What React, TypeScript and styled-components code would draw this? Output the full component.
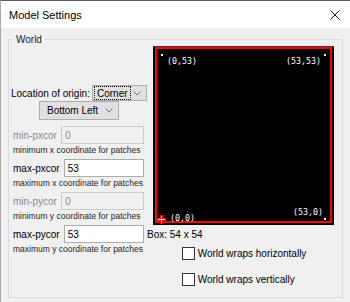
import styled, { createGlobalStyle } from "styled-components"

const GlobalStyle = createGlobalStyle`
  html, body {
    margin: 0;
    padding: 0;
    background: #f0f0f0;
  }
  body {
    font-family: "Liberation Sans", Arial, sans-serif;
    color: #000;
  }
`

const Window = styled.div`
  width: 350px;
  height: 302px;
  box-sizing: border-box;
  border-top: 1px solid #5a5a5a;
  border-left: 1px solid #a8a8a8;
  background: #f0f0f0;
  display: flex;
  flex-direction: column;
  overflow: hidden;
`

const TitleBar = styled.div`
  height: 27px;
  flex: none;
  background: #fff;
  display: flex;
  align-items: center;
  justify-content: space-between;
  padding: 0 10px 0 8px;
  font-size: 11px;
`

const Body = styled.div`
  flex: auto;
  display: flex;
  padding: 5px 7px 4px 7px;
`

const GroupBox = styled.fieldset`
  flex: auto;
  margin: 0;
  padding: 0 1px 0 2px;
  border: 1px solid #dcdcdc;
  display: flex;
  min-width: 0;
  legend {
    margin-left: 3px;
    padding: 0 2px;
    font-size: 10px;
    line-height: 13px;
    color: #1e1e1e;
  }
`

const LeftColumn = styled.div`
  width: 136px;
  flex: none;
  display: flex;
  flex-direction: column;
  padding-top: 39px;
  font-size: 10px;
`

const OriginRow = styled.div`
  display: flex;
  align-items: center;
  justify-content: space-between;
  height: 16px;
`

const Combo = styled.div<{ $width: number; $height: number; $center?: boolean }>`
  width: ${(p) => p.$width}px;
  height: ${(p) => p.$height}px;
  box-sizing: border-box;
  border: 1px solid #adadad;
  background: #e1e1e1;
  display: flex;
  align-items: center;
  justify-content: space-between;
  padding: 0 5px 0 1px;
  align-self: ${(p) => (p.$center ? "center" : "auto")};
  margin-bottom: ${(p) => (p.$center ? "2px" : "0")};
`

const ComboText = styled.span<{ $focus?: boolean }>`
  display: flex;
  align-items: center;
  height: 12px;
  padding: 0 2px 0 2px;
  margin-left: ${(p) => (p.$focus ? "0" : "3px")};
  border: 1px ${(p) => (p.$focus ? "dotted #000" : "solid transparent")};
`

const Chevron = () => (
  <svg width="8" height="5" viewBox="0 0 8 5">
    <polyline points="0.5,0.5 4,4 7.5,0.5" fill="none" stroke="#707070" strokeWidth="1" />
  </svg>
)

const FieldRow = styled.div<{ $disabled?: boolean }>`
  display: flex;
  align-items: center;
  gap: 4px;
  margin-top: 4px;
  padding: 0 3px 0 2px;
  color: ${(p) => (p.$disabled ? "#8a8a8a" : "#000")};
`

const FieldInput = styled.div<{ $disabled?: boolean }>`
  flex: auto;
  height: 18px;
  box-sizing: border-box;
  border: 1px solid ${(p) => (p.$disabled ? "#cccccc" : "#acacac")};
  background: ${(p) => (p.$disabled ? "#f0f0f0" : "#fff")};
  color: ${(p) => (p.$disabled ? "#8a8a8a" : "#000")};
  display: flex;
  align-items: center;
  padding-left: 3px;
`

const Hint = styled.div`
  font-size: 8.5px;
  line-height: 10px;
  margin-top: 1px;
  padding-left: 2px;
  color: #1e1e1e;
`

const RightColumn = styled.div`
  flex: auto;
  display: flex;
  flex-direction: column;
  font-size: 10px;
`

const Preview = styled.div`
  width: 181px;
  height: 179px;
  margin-left: 6px;
  box-sizing: border-box;
  background: #000;
  border-top: 1px solid #3c3c3c;
  padding: 0 2px 2px 2px;
`

const WorldEdge = styled.div`
  position: relative;
  height: 100%;
  box-sizing: border-box;
  border: 2px solid #ff0000;
`

const Coord = styled.span<{ $top?: number; $bottom?: number; $left?: number; $right?: number }>`
  position: absolute;
  font-family: "DejaVu Sans Mono", "Liberation Mono", monospace;
  font-size: 8.3px;
  line-height: 9px;
  color: #fff;
  white-space: nowrap;
  top: ${(p) => (p.$top !== undefined ? `${p.$top}px` : "auto")};
  bottom: ${(p) => (p.$bottom !== undefined ? `${p.$bottom}px` : "auto")};
  left: ${(p) => (p.$left !== undefined ? `${p.$left}px` : "auto")};
  right: ${(p) => (p.$right !== undefined ? `${p.$right}px` : "auto")};
`

const Dot = styled.span<{ $top?: number; $bottom?: number; $right?: number; $left?: number }>`
  position: absolute;
  width: 2px;
  height: 2px;
  background: #fff;
  top: ${(p) => (p.$top !== undefined ? `${p.$top}px` : "auto")};
  bottom: ${(p) => (p.$bottom !== undefined ? `${p.$bottom}px` : "auto")};
  left: ${(p) => (p.$left !== undefined ? `${p.$left}px` : "auto")};
  right: ${(p) => (p.$right !== undefined ? `${p.$right}px` : "auto")};
`

const Origin = styled.svg`
  position: absolute;
  left: 0;
  bottom: -3px;
`

const BoxLabel = styled.div`
  margin-top: 3px;
  line-height: 13px;
`

const Checks = styled.div`
  align-self: center;
  display: flex;
  flex-direction: column;
  gap: 13px;
  margin-top: 6px;
`

const CheckRow = styled.label`
  display: flex;
  align-items: center;
  gap: 3px;
  line-height: 13px;
`

const CheckBox = styled.span`
  width: 13px;
  height: 13px;
  box-sizing: border-box;
  border: 1px solid #333;
  background: #fff;
`

const fields = [
  { name: "min-pxcor", value: "0", hint: "minimum x coordinate for patches", disabled: true },
  { name: "max-pxcor", value: "53", hint: "maximum x coordinate for patches", disabled: false },
  { name: "min-pycor", value: "0", hint: "minimum y coordinate for patches", disabled: true },
  { name: "max-pycor", value: "53", hint: "maximum y coordinate for patches", disabled: false },
]

const App: React.FC = () => {
  return (
    <>
      <GlobalStyle />
      <Window>
        <TitleBar>
          <span>Model Settings</span>
          <svg width="10" height="10" viewBox="0 0 10 10">
            <path d="M0.5 0.5 L9.5 9.5 M9.5 0.5 L0.5 9.5" stroke="#111" strokeWidth="1" />
          </svg>
        </TitleBar>
        <Body>
          <GroupBox>
            <legend>World</legend>
            <LeftColumn>
              <OriginRow>
                <span>Location of origin:</span>
                <Combo $width={55} $height={16}>
                  <ComboText $focus>Corner</ComboText>
                  <Chevron />
                </Combo>
              </OriginRow>
              <Combo $width={80} $height={19} $center>
                <ComboText>Bottom Left</ComboText>
                <Chevron />
              </Combo>
              {fields.map((f) => (
                <div key={f.name}>
                  <FieldRow $disabled={f.disabled}>
                    <span>{f.name}</span>
                    <FieldInput $disabled={f.disabled}>{f.value}</FieldInput>
                  </FieldRow>
                  <Hint>{f.hint}</Hint>
                </div>
              ))}
            </LeftColumn>
            <RightColumn>
              <Preview>
                <WorldEdge>
                  <Dot $left={4} $top={5} />
                  <Coord $left={10} $top={8}>(0,53)</Coord>
                  <Dot $right={4} $top={5} />
                  <Coord $right={9} $top={8}>(53,53)</Coord>
                  <Coord $right={7} $bottom={4}>(53,0)</Coord>
                  <Dot $right={4} $bottom={1} />
                  <Origin width="9" height="9" viewBox="0 0 9 9">
                    <path d="M3 0h3v3h3v3h-3v3h-3v-3h-3v-3h3z" fill="#ff0000" />
                    <path d="M4.5 1v7M1 4.5h7" stroke="#ffd0d0" strokeWidth="1" />
                  </Origin>
                  <Coord $left={13} $bottom={-2}>(0,0)</Coord>
                </WorldEdge>
              </Preview>
              <BoxLabel>Box: 54 x 54</BoxLabel>
              <Checks>
                <CheckRow>
                  <CheckBox />
                  <span>World wraps horizontally</span>
                </CheckRow>
                <CheckRow>
                  <CheckBox />
                  <span>World wraps vertically</span>
                </CheckRow>
              </Checks>
            </RightColumn>
          </GroupBox>
        </Body>
      </Window>
    </>
  )
}

export default App
